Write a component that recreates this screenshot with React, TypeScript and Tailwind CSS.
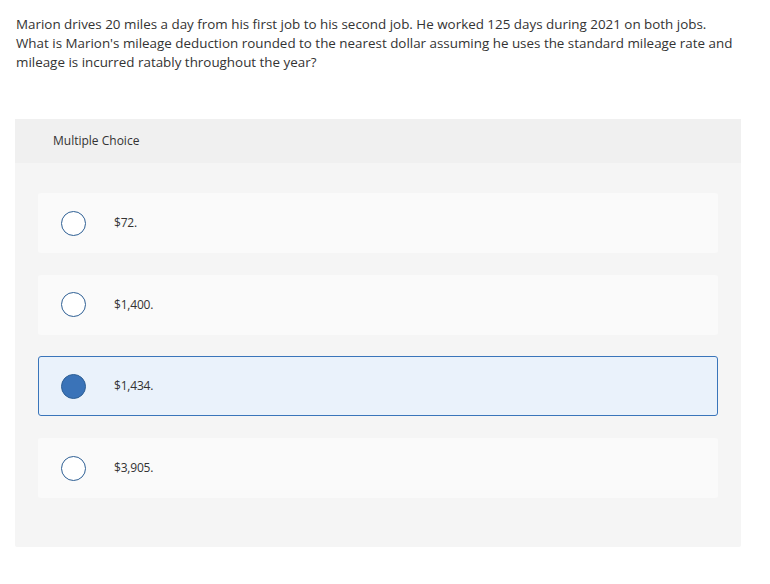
const options = [
  { id: 'a', label: '$72.' },
  { id: 'b', label: '$1,400.' },
  { id: 'c', label: '$1,434.' },
  { id: 'd', label: '$3,905.' },
];

export default function App() {
  const selected = 'c';

  return (
    <div className="min-h-screen bg-white text-[#333333]" style={{ fontFamily: '"Open Sans", Lato, sans-serif' }}>
      <div className="px-4 pt-[15px]">
        <p className="w-[723px] text-[13.4px] leading-[19px]">
          Marion drives 20 miles a day from his first job to his second job. He worked 125 days during 2021 on both
          jobs. What is Marion's mileage deduction rounded to the nearest dollar assuming he uses the standard mileage
          rate and mileage is incurred ratably throughout the year?
        </p>
      </div>

      <div className="ml-[15px] mt-[47px] w-[726px] rounded-[2px] bg-[#f5f5f5]">
        <div className="flex h-[44px] items-center bg-[#f0f0f0] pl-[38px] text-[12px]">Multiple Choice</div>
        <div className="flex flex-col gap-[21.7px] px-[23px] pt-[30px] pb-[49px]">
          {options.map((option) => {
            const isSelected = option.id === selected;
            return (
              <label
                key={option.id}
                className={
                  isSelected
                    ? 'flex h-[60px] cursor-pointer items-center rounded-[3px] border border-[#3a75ba] bg-[#eaf2fb] pl-[22px]'
                    : 'flex h-[60px] cursor-pointer items-center rounded-[3px] border border-transparent bg-[#fafafa] pl-[22px]'
                }
              >
                <span
                  className={
                    isSelected
                      ? 'h-[25px] w-[25px] shrink-0 rounded-full border border-[#2e5f94] bg-[#3a73b8]'
                      : 'h-[25px] w-[25px] shrink-0 rounded-full border-[1.5px] border-[#2e5f94] bg-white'
                  }
                />
                <span className="ml-[28px] text-[12px] tracking-[-0.2px]">{option.label}</span>
              </label>
            );
          })}
        </div>
      </div>
    </div>
  );
}
